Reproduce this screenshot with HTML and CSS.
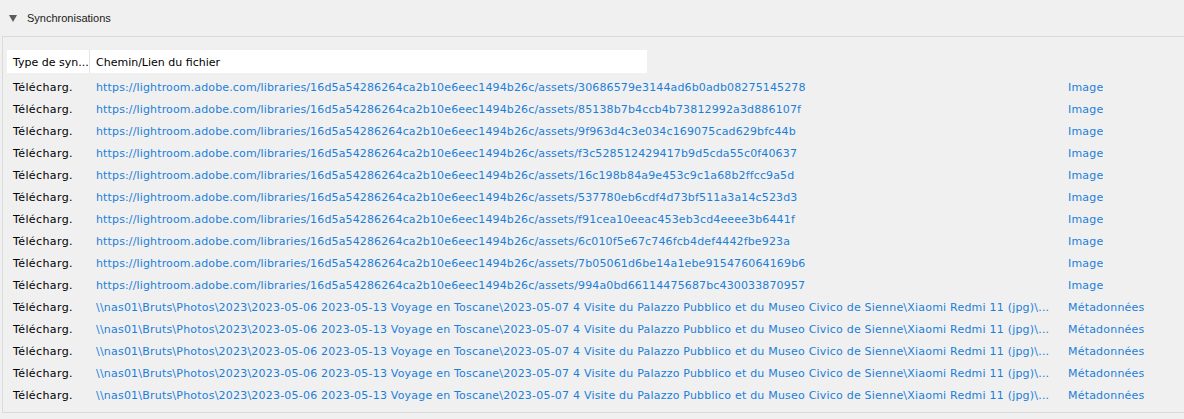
FILE: index.html
```
<!DOCTYPE html>
<html>
 <head>
  <title>Synchronisations</title>
  <link rel="stylesheet" href="styles.css">
 </head>
<body>
<div class="section-head">
 <span class="arrow"></span>
 <span class="section-title">Synchronisations</span>
</div>
<div class="panel">
 <div class="grid-head">
  <div class="cell c-type">Type de syn...</div>
  <div class="cell c-path sep">Chemin/Lien du fichier</div>
 </div>
 <div class="rows">
  <div class="row"><div class="cell c-type">Télécharg.</div><div class="cell c-path link">https://lightroom.adobe.com/libraries/16d5a54286264ca2b10e6eec1494b26c/assets/30686579e3144ad6b0adb08275145278</div><div class="cell c-kind link">Image</div></div>
  <div class="row"><div class="cell c-type">Télécharg.</div><div class="cell c-path link">https://lightroom.adobe.com/libraries/16d5a54286264ca2b10e6eec1494b26c/assets/85138b7b4ccb4b73812992a3d886107f</div><div class="cell c-kind link">Image</div></div>
  <div class="row"><div class="cell c-type">Télécharg.</div><div class="cell c-path link">https://lightroom.adobe.com/libraries/16d5a54286264ca2b10e6eec1494b26c/assets/9f963d4c3e034c169075cad629bfc44b</div><div class="cell c-kind link">Image</div></div>
  <div class="row"><div class="cell c-type">Télécharg.</div><div class="cell c-path link">https://lightroom.adobe.com/libraries/16d5a54286264ca2b10e6eec1494b26c/assets/f3c528512429417b9d5cda55c0f40637</div><div class="cell c-kind link">Image</div></div>
  <div class="row"><div class="cell c-type">Télécharg.</div><div class="cell c-path link">https://lightroom.adobe.com/libraries/16d5a54286264ca2b10e6eec1494b26c/assets/16c198b84a9e453c9c1a68b2ffcc9a5d</div><div class="cell c-kind link">Image</div></div>
  <div class="row"><div class="cell c-type">Télécharg.</div><div class="cell c-path link">https://lightroom.adobe.com/libraries/16d5a54286264ca2b10e6eec1494b26c/assets/537780eb6cdf4d73bf511a3a14c523d3</div><div class="cell c-kind link">Image</div></div>
  <div class="row"><div class="cell c-type">Télécharg.</div><div class="cell c-path link">https://lightroom.adobe.com/libraries/16d5a54286264ca2b10e6eec1494b26c/assets/f91cea10eeac453eb3cd4eeee3b6441f</div><div class="cell c-kind link">Image</div></div>
  <div class="row"><div class="cell c-type">Télécharg.</div><div class="cell c-path link">https://lightroom.adobe.com/libraries/16d5a54286264ca2b10e6eec1494b26c/assets/6c010f5e67c746fcb4def4442fbe923a</div><div class="cell c-kind link">Image</div></div>
  <div class="row"><div class="cell c-type">Télécharg.</div><div class="cell c-path link">https://lightroom.adobe.com/libraries/16d5a54286264ca2b10e6eec1494b26c/assets/7b05061d6be14a1ebe915476064169b6</div><div class="cell c-kind link">Image</div></div>
  <div class="row"><div class="cell c-type">Télécharg.</div><div class="cell c-path link">https://lightroom.adobe.com/libraries/16d5a54286264ca2b10e6eec1494b26c/assets/994a0bd66114475687bc430033870957</div><div class="cell c-kind link">Image</div></div>
  <div class="row"><div class="cell c-type">Télécharg.</div><div class="cell c-path link unc">\\nas01\Bruts\Photos\2023\2023-05-06 2023-05-13 Voyage en Toscane\2023-05-07 4 Visite du Palazzo Pubblico et du Museo Civico de Sienne\Xiaomi Redmi 11 (jpg)\...</div><div class="cell c-kind link">Métadonnées</div></div>
  <div class="row"><div class="cell c-type">Télécharg.</div><div class="cell c-path link unc">\\nas01\Bruts\Photos\2023\2023-05-06 2023-05-13 Voyage en Toscane\2023-05-07 4 Visite du Palazzo Pubblico et du Museo Civico de Sienne\Xiaomi Redmi 11 (jpg)\...</div><div class="cell c-kind link">Métadonnées</div></div>
  <div class="row"><div class="cell c-type">Télécharg.</div><div class="cell c-path link unc">\\nas01\Bruts\Photos\2023\2023-05-06 2023-05-13 Voyage en Toscane\2023-05-07 4 Visite du Palazzo Pubblico et du Museo Civico de Sienne\Xiaomi Redmi 11 (jpg)\...</div><div class="cell c-kind link">Métadonnées</div></div>
  <div class="row"><div class="cell c-type">Télécharg.</div><div class="cell c-path link unc">\\nas01\Bruts\Photos\2023\2023-05-06 2023-05-13 Voyage en Toscane\2023-05-07 4 Visite du Palazzo Pubblico et du Museo Civico de Sienne\Xiaomi Redmi 11 (jpg)\...</div><div class="cell c-kind link">Métadonnées</div></div>
  <div class="row"><div class="cell c-type">Télécharg.</div><div class="cell c-path link unc">\\nas01\Bruts\Photos\2023\2023-05-06 2023-05-13 Voyage en Toscane\2023-05-07 4 Visite du Palazzo Pubblico et du Museo Civico de Sienne\Xiaomi Redmi 11 (jpg)\...</div><div class="cell c-kind link">Métadonnées</div></div>
 </div>
</div>
</body>
</html>
```
FILE: styles.css
```
body {
 margin: 0;
 background: #f0f0f0;
 font-family: "DejaVu Sans", sans-serif;
 font-size: 11px;
 color: #000;
}
.section-head {
 height: 36px;
 display: flex;
 align-items: center;
 padding-left: 9px;
}
.arrow {
 width: 0;
 height: 0;
 border-left: 4px solid transparent;
 border-right: 4px solid transparent;
 border-top: 7px solid #5c5c5c;
 margin-right: 10px;
}
.section-title {
 font-family: "Liberation Sans", sans-serif;
 font-size: 11px;
 color: #1a1a1a;
}
.panel {
 margin-left: 2px;
 height: 377px;
 border-top: 1px solid #dadada;
 border-left: 1px solid #dadada;
 border-bottom: 1px solid #dadada;
 padding: 13px 0 0 4px;
 box-sizing: border-box;
}
.grid-head {
 display: flex;
 width: 640px;
 height: 23px;
 background: #fff;
 margin-bottom: 3px;
}
.grid-head .cell {
 padding-top: 1px;
}
.row {
 display: flex;
 height: 22px;
}
.cell {
 display: flex;
 align-items: center;
 white-space: nowrap;
 overflow: hidden;
}
.row .c-type {
 letter-spacing: 0.4px;
}
.c-type {
 width: 82px;
 padding-left: 6px;
 box-sizing: border-box;
}
.c-path {
 width: 974px;
 padding-left: 7px;
 box-sizing: border-box;
 letter-spacing: 0.14px;
}
.c-path.unc {
 letter-spacing: 0.21px;
}
.c-path.sep {
 border-left: 1px solid #e5e5e5;
 padding-left: 6px;
 letter-spacing: 0;
 flex: 1;
}
.c-kind {
 padding-left: 5px;
 letter-spacing: 0.2px;
}
.link {
 color: #1b7fd9;
}
```
